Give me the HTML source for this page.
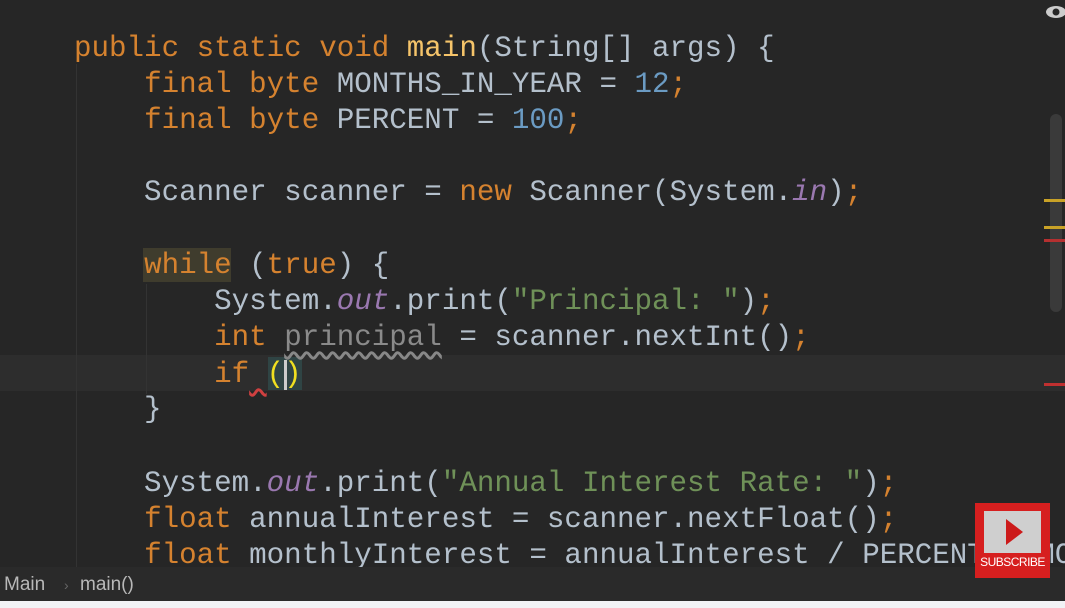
<!DOCTYPE html>
<html><head><style>
body{margin:0;width:1065px;height:608px;overflow:hidden;background:#f2f2f5;position:relative}
#ed{position:absolute;left:0;top:0;width:1065px;height:567px;background:#262626;overflow:hidden}
.l{position:absolute;left:74px;height:36px;line-height:36px;font-family:"Liberation Mono",monospace;font-size:29.2px;color:#b4c0cc;white-space:pre}
.k{color:#d5822f}.n{color:#6b9bc3}.s{color:#6f9158}.p{color:#9a78b0;font-style:italic}.y{color:#f5c46a}.g{color:#8a8a8a}
#bar{position:absolute;left:0;top:567px;width:1065px;height:34px;background:#2a2a2a;font-family:"Liberation Sans",sans-serif;font-size:19px;color:#b8b8b8;line-height:36px}
</style></head><body>
<div id="ed">
<div style="position:absolute;left:0;top:355px;width:1065px;height:36px;background:#2d2d2d"></div>
<div style="position:absolute;left:76px;top:64px;width:1px;height:505px;background:#333"></div>
<div style="position:absolute;left:146px;top:284px;width:1px;height:110px;background:#333"></div>
<div style="position:absolute;left:143px;top:248px;width:88px;height:34px;background:#3f3c2d"></div>
<div style="position:absolute;left:268px;top:357px;width:34px;height:33px;background:#2f4444"></div>
<div class="l" style="top:31px"><span class="k">public static void </span><span class="y">main</span>(String[] args) {</div>
<div class="l" style="top:67px">    <span class="k">final byte </span>MONTHS_IN_YEAR = <span class="n">12</span><span class="k">;</span></div>
<div class="l" style="top:103px">    <span class="k">final byte </span>PERCENT = <span class="n">100</span><span class="k">;</span></div>
<div class="l" style="top:175px">    Scanner scanner = <span class="k">new </span>Scanner(System.<span class="p">in</span>)<span class="k">;</span></div>
<div class="l" style="top:248px">    <span class="k">while </span>(<span class="k">true</span>) {</div>
<div class="l" style="top:284px">        System.<span class="p">out</span>.print(<span class="s">"Principal: "</span>)<span class="k">;</span></div>
<div class="l" style="top:320px">        <span class="k">int </span><span class="g" style="text-decoration:underline wavy #888;text-underline-offset:6px">principal</span> = scanner.nextInt()<span class="k">;</span></div>
<div class="l" style="top:357px">        <span class="k">if</span><span style="text-decoration:underline wavy #d04040;text-underline-offset:6px"> </span><span style="color:#f0e020">()</span></div>
<div style="position:absolute;left:284px;top:360px;width:3px;height:30px;background:#ccc"></div>
<div class="l" style="top:392px">    }</div>
<div class="l" style="top:466px">    System.<span class="p">out</span>.print(<span class="s">"Annual Interest Rate: "</span>)<span class="k">;</span></div>
<div class="l" style="top:502px">    <span class="k">float </span>annualInterest = scanner.nextFloat()<span class="k">;</span></div>
<div class="l" style="top:538px">    <span class="k">float </span>monthlyInterest = annualInterest / PERCENT / MONTHS_IN_YEAR<span class="k">;</span></div>
<div style="position:absolute;left:1050px;top:114px;width:12px;height:198px;border-radius:6px;background:#3a3a3a"></div>
<div style="position:absolute;left:1044px;top:199px;width:21px;height:3px;background:#c9a227"></div>
<div style="position:absolute;left:1044px;top:226px;width:21px;height:3px;background:#c9a227"></div>
<div style="position:absolute;left:1044px;top:239px;width:21px;height:3px;background:#b53030"></div>
<div style="position:absolute;left:1044px;top:383px;width:21px;height:3px;background:#c03030"></div>
<svg style="position:absolute;left:1044px;top:4px" width="21" height="16"><ellipse cx="12" cy="8" rx="10" ry="6" fill="#ccc"/><circle cx="12" cy="8" r="3.5" fill="#262626"/></svg>
</div>
<div id="bar"><span style="position:absolute;left:4px">Main</span><span style="position:absolute;left:64px;color:#666;font-size:14px">›</span><span style="position:absolute;left:80px">main()</span></div>
<div style="position:absolute;left:975px;top:503px;width:75px;height:75px;background:#d61f1f">
<div style="position:absolute;left:9px;top:8px;width:57px;height:42px;background:#cfcfcf"></div>
<svg style="position:absolute;left:9px;top:8px" width="57" height="42"><polygon points="22,8 22,34 39,21" fill="#cc1a1a"/></svg>
<div style="position:absolute;left:0;top:52px;width:75px;text-align:center;font-family:'Liberation Sans',sans-serif;font-size:12px;color:#fff;letter-spacing:-0.5px">SUBSCRIBE</div>
</div>
</body></html>
